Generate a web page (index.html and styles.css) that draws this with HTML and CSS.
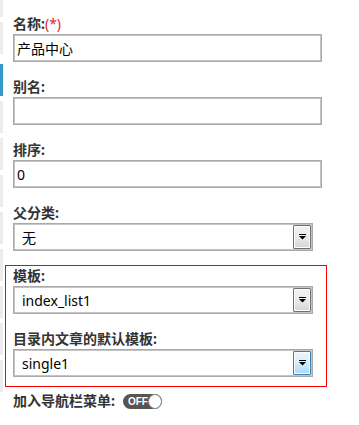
FILE: index.html
```html
<!DOCTYPE html>
<html lang="zh-CN">
<head>
    <meta charset="UTF-8">
    <meta name="viewport" content="width=device-width, initial-scale=1.0">
    <title>编辑分类</title>
    <link rel="stylesheet" href="styles.css">
</head>
<body>
    <div class="side-menu">
        <div class="menu-item first"></div>
        <div class="menu-item"></div>
        <div class="menu-item active"></div>
        <div class="menu-item"></div>
        <div class="menu-item"></div>
        <div class="menu-item"></div>
        <div class="menu-item"></div>
        <div class="menu-item"></div>
        <div class="menu-item"></div>
        <div class="menu-item"></div>
        <div class="menu-item"></div>
    </div>

    <form class="edit-form">
        <div class="form-group">
            <label class="form-label">名称:<span class="required">(*)</span></label>
            <input type="text" class="input-field" value="产品中心">
        </div>
        <div class="form-group">
            <label class="form-label">别名:</label>
            <input type="text" class="input-field" value="">
        </div>
        <div class="form-group">
            <label class="form-label">排序:</label>
            <input type="text" class="input-field" value="0">
        </div>
        <div class="form-group">
            <label class="form-label">父分类:</label>
            <div class="select-box">
                <span class="select-value">无</span>
                <span class="select-button">
                    <svg width="9" height="6" viewBox="0 0 9 6"><rect x="1" y="0" width="7" height="1" fill="#000"/><path d="M1 2h7l-3.5 3.5z" fill="#000"/></svg>
                </span>
            </div>
        </div>

        <div class="template-box">
            <div class="form-group">
                <label class="form-label">模板:</label>
                <div class="select-box">
                    <span class="select-value">index_list1</span>
                    <span class="select-button">
                        <svg width="9" height="6" viewBox="0 0 9 6"><rect x="1" y="0" width="7" height="1" fill="#000"/><path d="M1 2h7l-3.5 3.5z" fill="#000"/></svg>
                    </span>
                </div>
            </div>
            <div class="form-group last">
                <label class="form-label">目录内文章的默认模板:</label>
                <div class="select-box">
                    <span class="select-value">single1</span>
                    <span class="select-button hover">
                        <svg width="9" height="6" viewBox="0 0 9 6"><rect x="1" y="0" width="7" height="1" fill="#000"/><path d="M1 2h7l-3.5 3.5z" fill="#000"/></svg>
                    </span>
                </div>
            </div>
        </div>

        <div class="switch-row">
            <label class="form-label inline">加入导航栏菜单:</label>
            <span class="switch">
                <span class="switch-text">OFF</span>
                <span class="switch-knob"></span>
            </span>
        </div>
    </form>
</body>
</html>
```

FILE: styles.css
```css
body {
    margin: 0;
    padding: 0;
    font-family: "Noto Sans", "Noto Sans CJK SC", sans-serif;
    color: #333;
    background: #fff;
    display: flex;
    height: 425px;
    overflow: hidden;
}

.side-menu {
    width: 3px;
    display: flex;
    flex-direction: column;
    margin-top: -15px;
}

.menu-item {
    height: 32px;
    margin-bottom: 5px;
    background-color: #ececec;
    flex-shrink: 0;
}

.menu-item.active {
    background-color: #3399cc;
    margin-top: 5px;
}

.edit-form {
    padding-left: 10px;
    padding-top: 16px;
}

.form-group {
    margin-bottom: 17px;
}

.form-group.last {
    margin-bottom: 0;
}

.form-label {
    display: block;
    font-size: 14px;
    font-weight: bold;
    line-height: 16px;
    margin-bottom: 2px;
    color: #333;
}

.form-label.inline {
    display: inline-block;
    margin: 0;
}

.required {
    color: #e8212b;
    font-weight: normal;
}

.input-field {
    box-sizing: border-box;
    width: 309px;
    height: 28px;
    margin: 0;
    padding: 0 3px;
    border: 1px solid #a9a9a9;
    outline: 1px solid #c4c4c4;
    outline-offset: -2px;
    font-family: "Noto Sans", "Noto Sans CJK SC", sans-serif;
    font-size: 14px;
    color: #000;
    display: block;
}

.select-box {
    box-sizing: border-box;
    width: 300px;
    height: 28px;
    border: 1px solid #a9a9a9;
    outline: 1px solid #c4c4c4;
    outline-offset: -2px;
    display: flex;
    align-items: center;
    justify-content: space-between;
    background: #fff;
}

.select-value {
    padding-left: 8px;
    font-size: 14px;
    color: #000;
}

.select-button {
    box-sizing: border-box;
    width: 18px;
    height: 24px;
    margin-right: 1px;
    border: 1px solid #707070;
    border-radius: 1px;
    background: linear-gradient(#f2f2f2, #ebebeb 45%, #d5d5d5);
    box-shadow: inset 0 0 0 1px #fcfcfc;
    display: flex;
    align-items: center;
    justify-content: center;
    position: relative;
    z-index: 1;
}

.select-button.hover {
    border-color: #3c7fb1;
    background: linear-gradient(#eaf6fd, #d9f0fc 45%, #a7d9f5);
}

.template-box {
    margin: -3px 0 6px -8px;
    padding: 2px 0 9px 7px;
    width: 313px;
    border: 1px solid #ff0000;
}

.switch-row {
    display: flex;
    align-items: center;
    gap: 8px;
}

.switch {
    width: 39px;
    height: 15px;
    border-radius: 8px;
    background-color: #555;
    display: flex;
    align-items: center;
    justify-content: space-between;
    position: relative;
}

.switch-text {
    color: #fff;
    font-size: 10px;
    font-weight: bold;
    padding-left: 5px;
    font-family: "Liberation Sans", Arial, sans-serif;
}

.switch-knob {
    width: 15px;
    height: 15px;
    box-sizing: border-box;
    border-radius: 50%;
    background: #fff;
    border: 1px solid #888;
}
```
